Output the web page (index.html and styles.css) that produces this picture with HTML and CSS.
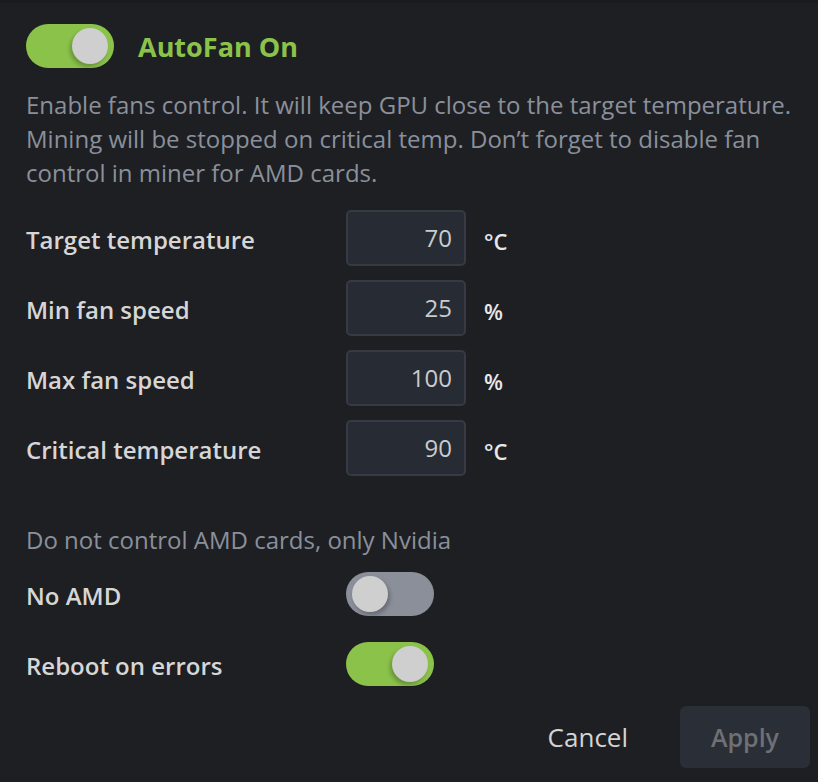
FILE: index.html
```html
<!DOCTYPE html>
<html lang="en">
<head>
  <meta charset="UTF-8">
  <meta name="viewport" content="width=device-width, initial-scale=1.0">
  <title>AutoFan</title>
  <link rel="stylesheet" href="styles.css">
</head>
<body>
  <div class="panel">
    <div class="head">
      <span class="switch on big"><span class="knob"></span></span>
      <h1>AutoFan On</h1>
    </div>

    <p class="hint desc">Enable fans control. It will keep GPU close to the target temperature. Mining will be stopped on critical temp. Don’t forget to disable fan control in miner for AMD cards.</p>

    <div class="fields">
      <div class="row">
        <label>Target temperature</label>
        <div class="field">70</div>
        <span class="unit">°C</span>
      </div>
      <div class="row">
        <label>Min fan speed</label>
        <div class="field">25</div>
        <span class="unit">%</span>
      </div>
      <div class="row">
        <label>Max fan speed</label>
        <div class="field">100</div>
        <span class="unit">%</span>
      </div>
      <div class="row">
        <label>Critical temperature</label>
        <div class="field">90</div>
        <span class="unit">°C</span>
      </div>
    </div>

    <p class="hint amd">Do not control AMD cards, only Nvidia</p>

    <div class="row toggle-row">
      <label>No AMD</label>
      <span class="switch off"><span class="knob"></span></span>
    </div>
    <div class="row toggle-row">
      <label>Reboot on errors</label>
      <span class="switch on"><span class="knob"></span></span>
    </div>

    <div class="actions">
      <button class="btn-link">Cancel</button>
      <button class="btn-apply" disabled>Apply</button>
    </div>
  </div>
</body>
</html>
```

FILE: styles.css
```css
body { margin: 0; background: #1e1f23; font-family: "Open Sans", Arial, sans-serif; color: #d4d4d4; }
.panel { border-top: 3px solid #1a1b1e; padding: 21px 8px 14px 26px; }

.head { display: flex; align-items: center; gap: 24px; }
h1 { margin: 0; font-size: 27px; font-weight: 700; color: #8bc34a; }

.switch { position: relative; display: inline-block; width: 88px; height: 44px; border-radius: 22px; flex-shrink: 0; }
.switch.on { background: #8bc34a; }
.switch.off { background: #8a8f99; }
.knob { position: absolute; top: 4px; width: 36px; height: 36px; border-radius: 50%; background: #cfcfcf; box-shadow: -2px 3px 4px rgba(0,0,0,0.25); }
.switch.on .knob { left: 46px; }
.switch.off .knob { left: 6px; box-shadow: 2px 3px 4px rgba(0,0,0,0.25); }

.hint { color: #8a909b; font-size: 24px; line-height: 34px; margin: 0; }
.desc { margin-top: 20px; }

.fields { margin-top: 20px; }
.row { display: flex; align-items: center; height: 56px; margin-bottom: 14px; }
.row label { width: 320px; padding-top: 3px; font-size: 24px; font-weight: 600; color: #d6d6d6; }
.field { box-sizing: border-box; width: 120px; height: 56px; padding: 0 12px; background: #272b33; border: 2px solid #363a42; border-radius: 5px; text-align: right; font-size: 24px; line-height: 52px; color: #cbcbcb; }
.unit { margin-left: 18px; padding-top: 5px; font-size: 22px; font-weight: 600; color: #e8e8e8; }

.amd { margin-top: 47px; margin-bottom: 15px; }
.toggle-row { height: 44px; margin-bottom: 26px; }

.actions { display: flex; justify-content: flex-end; align-items: center; gap: 26px; margin-top: -6px; }
button { font-family: inherit; font-size: 26px; border: 0; }
.btn-link { background: none; color: #d4d4d4; padding: 0 26px; }
.btn-apply { width: 130px; height: 62px; border-radius: 6px; background: #2a2e36; color: #6e7074; font-weight: 600; font-size: 25px; }
```
